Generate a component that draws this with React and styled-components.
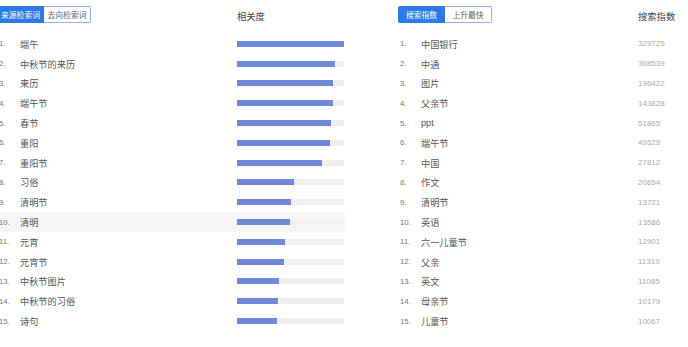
import React from "react"
import styled, { createGlobalStyle, css } from "styled-components"

const GlobalStyle = createGlobalStyle`
    html, body {
        margin: 0;
        padding: 0;
        background: #fff;
        overflow: hidden;
    }
    body {
        font-family: "Liberation Sans", "Noto Sans CJK SC", sans-serif;
        color: #333;
    }
`

const Page = styled.div`
    display: flex;
    margin-left: -3px;
    width: 694px;
`
const Panel = styled.section`
    width: ${props => props.width}px;
    flex-shrink: 0;
    ${props => props.right && css`
        margin-left: 53px;
    `}
`
const Head = styled.div`
    height: 34px;
    display: flex;
    align-items: flex-start;
`
const Toggle = styled.div`
    display: flex;
    margin-top: 6px;
    width: 240px;
`
const ToggleBtn = styled.div`
    width: 47px;
    height: 17px;
    box-sizing: border-box;
    display: flex;
    align-items: center;
    justify-content: center;
    font-size: 7.8px;
    white-space: nowrap;
    border: 1px solid #8fb4f2;
    color: #666;
    background: #fff;
    ${props => props.active && css`
        background: #2b7ae8;
        border-color: #2b7ae8;
        color: #fff;
    `}
    &:first-child { border-radius: 2px 0 0 2px; }
    &:last-child { border-radius: 0 2px 2px 0; border-left: 0; }
`
const ColTitle = styled.div`
    margin-top: 9px;
    font-size: 9.3px;
    color: #444;
`
const Row = styled.div`
    height: 19.8px;
    display: flex;
    align-items: center;
    padding-left: 2px;
    ${props => props.hl && css`
        background: #f5f5f5;
    `}
`
const Num = styled.span`
    width: 21px;
    font-size: 7.8px;
    color: #777;
`
const Word = styled.span`
    width: 217px;
    font-size: 9.2px;
    color: #555;
`
const Track = styled.div`
    width: 107px;
    height: 6px;
    background: #f0f0f0;
`
const Fill = styled.div`
    height: 100%;
    background: #6f88d8;
`
const Value = styled.span`
    font-size: 8px;
    color: #aaa;
`

const related = [
    ["端午", 100], ["中秋节的来历", 91.6], ["来历", 89.7], ["端午节", 89.7], ["春节", 87.9],
    ["重阳", 86.9], ["重阳节", 79.4], ["习俗", 53.3], ["清明节", 50.5], ["清明", 49.5],
    ["元宵", 44.9], ["元宵节", 43.9], ["中秋节图片", 39.3], ["中秋节的习俗", 38.3], ["诗句", 37.4],
]

const searches = [
    ["中国银行", 329725], ["中通", 308539], ["图片", 196422], ["父亲节", 143828], ["ppt", 51865],
    ["端午节", 49529], ["中国", 27812], ["作文", 20654], ["清明节", 13721], ["英语", 13586],
    ["六一儿童节", 12901], ["父亲", 11319], ["英文", 11085], ["母亲节", 10179], ["儿童节", 10067],
]

const App = () => (
    <>
        <GlobalStyle />
        <Page>
            <Panel width={348}>
                <Head>
                    <Toggle>
                        <ToggleBtn active>来源检索词</ToggleBtn>
                        <ToggleBtn>去向检索词</ToggleBtn>
                    </Toggle>
                    <ColTitle>相关度</ColTitle>
                </Head>
                {related.map(([word, pct], i) => (
                    <Row key={word} hl={i === 9}>
                        <Num>{i + 1}.</Num>
                        <Word>{word}</Word>
                        <Track>
                            <Fill style={{ width: `${pct}%` }} />
                        </Track>
                    </Row>
                ))}
            </Panel>
            <Panel right width={290}>
                <Head>
                    <Toggle>
                        <ToggleBtn active>搜索指数</ToggleBtn>
                        <ToggleBtn>上升最快</ToggleBtn>
                    </Toggle>
                    <ColTitle>搜索指数</ColTitle>
                </Head>
                {searches.map(([word, n], i) => (
                    <Row key={word}>
                        <Num>{i + 1}.</Num>
                        <Word>{word}</Word>
                        <Value>{n}</Value>
                    </Row>
                ))}
            </Panel>
        </Page>
    </>
)

export default App
